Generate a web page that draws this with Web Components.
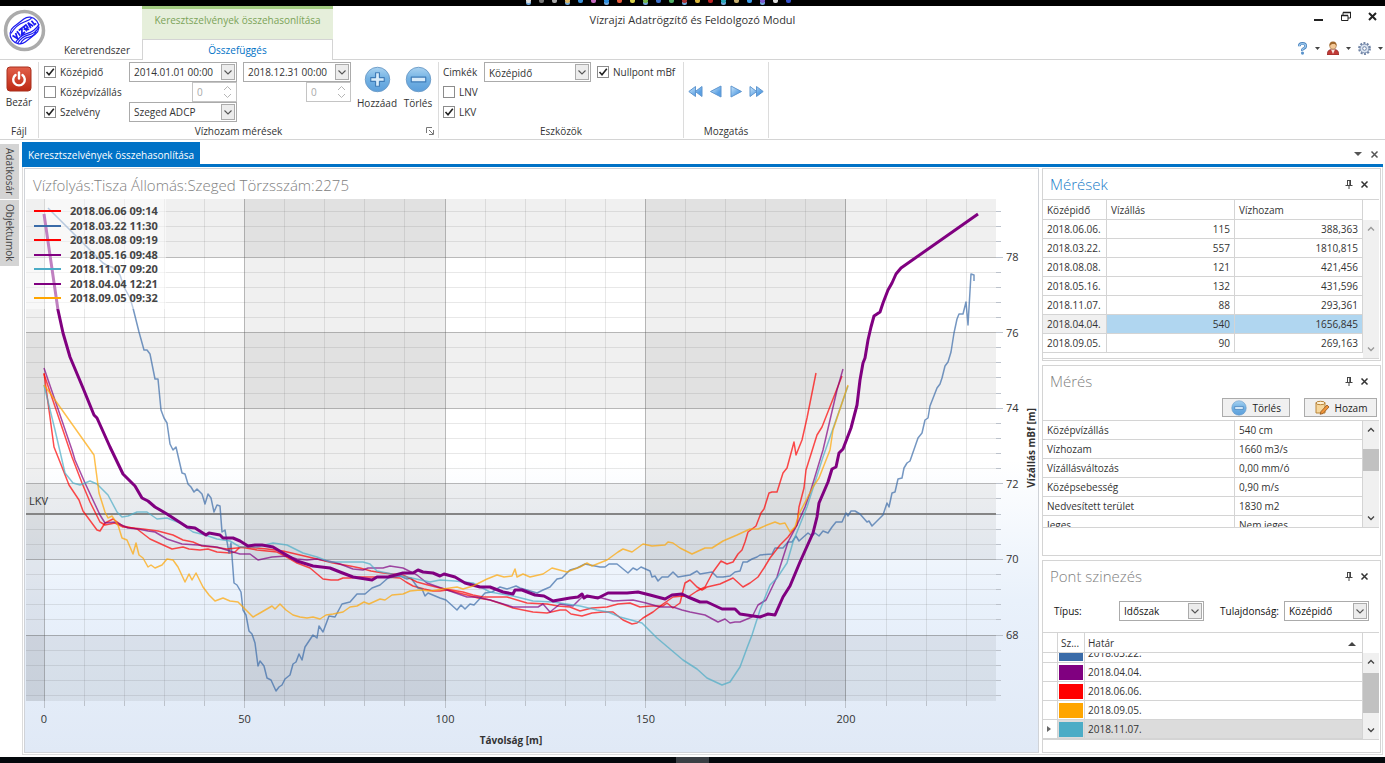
<!DOCTYPE html>
<html lang="hu">
<head>
<meta charset="utf-8">
<title>Vízrajzi Adatrögzítő és Feldolgozó Modul</title>
<style>
  body { margin: 0; font: 10px/16px "Open Sans", "Noto Sans", sans-serif; color: #333; background: #fff; }
</style>
</head>
<body>
<viz-app></viz-app>
<script>
const BASE = `
  *, *::before, *::after { box-sizing: border-box; }
  :host { display: block; box-sizing: border-box; }
  button, input, select { font: inherit; color: inherit; margin: 0; }
  button { background: none; border: 0; padding: 0; display: inline-flex; align-items: center; justify-content: center; }
  svg { display: block; }
`;
class VizElement extends HTMLElement {
  connectedCallback() {
    if (this.shadowRoot) return;
    const root = this.attachShadow({ mode: 'open' });
    root.innerHTML = `<style>${BASE}${this.styles()}</style>${this.markup()}`;
    this.ready(root);
  }
  styles() { return ''; }
  markup() { return '<slot></slot>'; }
  ready() {}
  attr(name, fallback = '') { return this.getAttribute(name) ?? fallback; }
}

const CARET = '<svg width="8" height="5" viewBox="0 0 8 5"><path d="M.5.5 4 4 7.5.5" fill="none" stroke="#555" stroke-width="1.1"/></svg>';
const TRI = '<svg width="5" height="3" viewBox="0 0 5 3"><path d="M0 0h5L2.500 3z" fill="#444"/></svg>';
const ROUND = (size, plus) => `<svg width="${size}" height="${size}" viewBox="0 0 28 28">
  <defs><linearGradient id="g" x2="0" y2="1"><stop stop-color="#a9d2f0"/><stop offset=".45" stop-color="#74b3e4"/><stop offset="1" stop-color="#5c9fdb"/></linearGradient></defs>
  <circle cx="14" cy="14" r="12.700" fill="url(#g)" stroke="#6d9cc8" stroke-width="1"/>
  <path d="${plus ? 'M12 7h4v5h5v4h-5v5h-4v-5H7v-4h5z' : 'M6.500 11.500h15v5h-15z'}" fill="#d9ecfa" stroke="#3f7cb8" stroke-width="1.200" stroke-linejoin="round"/></svg>`;

customElements.define('viz-check', class extends VizElement {
  styles() { return `
    label { display: flex; align-items: center; gap: 4px; height: 20px; white-space: nowrap; }
    input { appearance: none; width: 12px; height: 12px; border: 1px solid #8c8c8c; background: #fff; }
    input:checked { background: #fff url("data:image/svg+xml,%3Csvg xmlns='http://www.w3.org/2000/svg' viewBox='0 0 10 10'%3E%3Cpath d='M1.500 5 4 7.700 8.800 1.800' fill='none' stroke='%23222' stroke-width='1.600'/%3E%3C/svg%3E"); }
  `; }
  markup() { return `<label><input type="checkbox" ${this.hasAttribute('checked') ? 'checked' : ''}><span>${this.attr('label')}</span></label>`; }
});

customElements.define('viz-combo', class extends VizElement {
  styles() { return `
    .box { display: flex; align-items: center; height: 20px; border: 1px solid #ababab; background: #fff; position: relative; }
    select, input { appearance: none; border: 0; outline: 0; background: transparent; width: 100%; height: 18px; padding: 0 18px 0 4px; border-radius: 0; }
    .drop { position: absolute; right: 1px; top: 1px; bottom: 1px; width: 14px; border: 1px solid #ababab; background: #ececec; display: flex; align-items: center; justify-content: center; pointer-events: none; }
  `; }
  markup() {
    const v = this.attr('value'), l = this.attr('label');
    const field = this.hasAttribute('date')
      ? `<input type="text" aria-label="${l}" value="${v}">`
      : `<select aria-label="${l}"><option>${v}</option></select>`;
    return `<div class="box">${field}<span class="drop">${CARET}</span></div>`;
  }
});

customElements.define('viz-spin', class extends VizElement {
  styles() { return `
    .box { display: flex; height: 20px; border: 1px solid #c4c4c4; background: #fff; align-items: center; }
    input { appearance: textfield; border: 0; width: 12px; flex: 1; padding: 0 0 0 4px; background: transparent; color: #a8a8a8; }
    input::-webkit-inner-spin-button { display: none; }
    svg { margin-right: 4px; }
  `; }
  markup() { return `<div class="box"><input type="number" value="0" disabled aria-label="${this.attr('label')}">
    <svg width="9" height="14" viewBox="0 0 9 14"><path d="M1 5l3.500-3.500L8 5M1 9l3.500 3.500L8 9" fill="none" stroke="#b5b5b5"/></svg></div>`; }
});

customElements.define('viz-taskbar', class extends VizElement {
  styles() { return `
    :host { background: #000; height: 6px; overflow: hidden; }
    div { display: flex; justify-content: center; gap: 8px; margin-right: 69px; }
    i { width: 5px; height: 3px; border-radius: 0 0 2px 2px; }
    .on { box-shadow: 0 2px #6fa6d8; }
  `; }
  markup() {
    const c = ['#ddd', '#777', '#aaa', '#dcb96a', '#3a8fd8', '#c66ac0', '#2d8fe0', '#e55b3c', '#d8d04a', '#78b84a', '#3b6fc8', '#4fae66', '#a33', '#d9b53a', '#b22', '#2aa6b8', '#c8b070', '#3d9be6', '#7a5cd0', '#ddd', '#3350c8'];
    return `<div>${c.map((x, i) => `<i class="${i % 3 ? '' : 'on'}" style="background:${x}"></i>`).join('')}</div>`;
  }
});

customElements.define('viz-titlebar', class extends VizElement {
  styles() { return `
    :host { display: grid; grid-template-columns: 142px 191px minmax(0, 1fr); height: 54px; border-bottom: 1px solid #d4d4d4; position: relative; }
    .logo { position: absolute; left: 3px; top: 3px; }
    .first { align-self: end; justify-self: end; margin-right: 12px; height: 18px; }
    .ctx { background: #e6efdb; border-top: 3px solid #a4cc82; display: flex; flex-direction: column; justify-content: space-between; text-align: center; color: #7ba358; margin-bottom: -1px; }
    .ctx span { padding-top: 3px; }
    .ctx button { background: #fff; color: #0072c6; border: 1px solid #d4d4d4; border-bottom: 0; height: 21px; }
    h1 { position: absolute; left: 0; right: 0; top: 6px; margin: 0; text-align: center; font: inherit; font-size: 11px; pointer-events: none; }
    .tools { display: flex; flex-direction: column; justify-content: space-between; align-items: flex-end; padding: 4px 2px 2px 0; }
    .win { display: flex; gap: 16px; padding-right: 5px; height: 12px; }
    .menu { display: flex; align-items: center; gap: 7px; height: 18px; }
    .menu button { gap: 7px; }
  `; }
  markup() { return `
    <svg class="logo" width="43" height="43" viewBox="0 0 43 43">
      <circle cx="21.500" cy="21.500" r="19" fill="#fff" stroke="#ababab" stroke-width="3.500"/>
      <g fill="none" stroke="#1a1af0" stroke-width="1.200" transform="rotate(-38 21.500 21.500)">
        <rect x="6" y="12" width="31" height="19" rx="9"/>
        <path d="M9 15.500q9-3.500 17-1t9 1M7 25.500q8-3 15 0t15 0M8 27.500q7-3 14 0t13 0M10 29.500q6-3 11 0t10-1"/>
        <path d="M9 18l2 5.500 2-5.500M15 17.500V23M17 18h4l-4 5h4M23 23.500V18h3v3h-3l3 2.500M28 23.500l1-6 2 6M33 18v5h2" stroke-width="1.700"/>
      </g>
    </svg>
    <button class="first">Keretrendszer</button>
    <div class="ctx"><span>Keresztszelvények összehasonlítása</span><button>Összefüggés</button></div>
    <div class="tools">
      <div class="win">
        <button aria-label="Kis méret"><svg width="11" height="11"><path d="M1 8h9v2H1z" fill="#222"/></svg></button>
        <button aria-label="Előző méret"><svg width="11" height="11" fill="none" stroke="#222"><path d="M3 4V1.500h7.500V7H8M1.500 4.500h6.500v5H1.500z"/><path d="M1 4.500h7M3 1.500h8" stroke-width="1.600"/></svg></button>
        <button aria-label="Bezárás"><svg width="11" height="11"><path d="M2 2l7 7M9 2L2 9" stroke="#222" stroke-width="2"/></svg></button>
      </div>
      <div class="menu">
        <button aria-label="Súgó"><svg width="11" height="13" viewBox="0 0 12 14"><path d="M2.500 4.500q0-3 3.500-3t3.500 3q0 1.500-2 2.500T6 9.500" fill="none" stroke="#4b83bd" stroke-width="3"/><path d="M2.500 4.200q0-2.500 3.500-2.500t3.500 2.500q0 1.500-2 2.500T6 9" fill="none" stroke="#9cc8ee" stroke-width="1.400"/><circle cx="6" cy="12" r="1.700" fill="#5a93cc"/></svg>${TRI}</button>
        <button aria-label="Felhasználó"><svg width="12" height="14" viewBox="0 0 12 14"><path d="M0 14q0-5 4-5.500h4q4 .5 4 5.500z" fill="#c03a36" stroke="#7f2523" stroke-width=".6"/><path d="M4 8.500h4L6 13z" fill="#f6e6e0"/><circle cx="6" cy="4.800" r="3.400" fill="#f4c896" stroke="#8a5a28" stroke-width=".5"/><path d="M2.500 5Q2 .5 6 .5T9.500 5L8 3H5z" fill="#a0682c"/></svg>${TRI}</button>
        <button aria-label="Beállítások"><svg width="13" height="13" viewBox="0 0 13 13"><circle cx="6.500" cy="6.500" r="5.400" fill="none" stroke="#7185a6" stroke-width="2" stroke-dasharray="2 1.390"/><circle cx="6.500" cy="6.500" r="4.400" fill="#dbe4f0" stroke="#7f93b3"/><circle cx="6.500" cy="6.500" r="1.800" fill="#fff" stroke="#7085a8"/></svg>${TRI}</button>
      </div>
    </div>
    <h1>Vízrajzi Adatrögzítő és Feldolgozó Modul</h1>`; }
});

customElements.define('viz-group', class extends VizElement {
  styles() { return `
    :host { display: flex; flex-direction: column; justify-content: space-between; border-right: 1px solid #dcdcdc; margin: 2px 0 1px; position: relative; }
    .name { text-align: center; line-height: 14px; }
    button { position: absolute; right: 4px; bottom: 3px; }
  `; }
  markup() { return `<slot></slot><div class="name">${this.attr('name')}</div>${this.hasAttribute('more')
    ? '<button aria-label="További beállítások"><svg width="8" height="8" fill="none" stroke="#777"><path d="M.5 6V.5H6M3 3l4 4M7.500 3v4.500H3"/></svg></button>' : ''}`; }
});

customElements.define('viz-ribbon', class extends VizElement {
  styles() { return `
    :host { display: flex; height: 80px; border-bottom: 1px solid #d4d4d4; }
    .file { width: 39px; }
    .flow { width: 400px; }
    .tools { width: 245px; }
    .move { width: 85px; }
    .big { flex-direction: column; justify-content: flex-start; gap: 2px; width: 40px; padding-top: 4px; }
    .file .big { width: 38px; }
    .row { display: flex; }
    .form { display: grid; grid-template-columns: 79px 108px 108px; column-gap: 6px; padding-left: 5px; }
    .form > :first-child, .form > .c { margin-right: -6px; }
    .form viz-spin { width: 45px; justify-self: end; }
    .adders { display: flex; gap: 1px; padding-left: 6px; }
    .eszk { display: grid; grid-template-columns: 36px 107px auto; column-gap: 5px; padding-left: 4px; line-height: 20px; justify-content: start; }
    .eszk viz-check { line-height: 16px; padding-left: 1px; }
    .eszk .w { grid-column: 1 / -1; padding: 0; }
    .arrows { display: flex; gap: 6px; justify-content: center; padding-top: 23px; }
  `; }
  markup() {
    const arrow = (label, d, w = 14) => `<button aria-label="${label}"><svg width="${w}" height="13" viewBox="0 0 ${w} 13"><defs><linearGradient id="a" x2="1" y2="1"><stop stop-color="#cfe8fa"/><stop offset=".7" stop-color="#5aa0e4"/></linearGradient></defs><path d="${d}" fill="url(#a)" stroke="#5f96cf" stroke-width="1" stroke-linejoin="round"/></svg></button>`;
    return `
    <viz-group class="file" name="Fájl"><button class="big">
      <svg width="26" height="26" viewBox="0 0 26 26"><defs><linearGradient id="r" x2="0" y2="1"><stop stop-color="#e2604a"/><stop offset="1" stop-color="#bd2813"/></linearGradient></defs><rect x="1" y="1" width="24" height="24" rx="3" fill="url(#r)" stroke="#a8301f"/><path d="M9.500 9a5.800 5.800 0 1 0 7 0" fill="none" stroke="#fff" stroke-width="2.400" stroke-linecap="round"/><path d="M13 6.500v6" stroke="#fff" stroke-width="2.400" stroke-linecap="round"/></svg>
      <span>Bezár</span></button></viz-group>
    <viz-group class="flow" name="Vízhozam mérések" more><div class="row">
      <div class="form">
        <viz-check checked label="Középidő"></viz-check>
        <viz-combo date label="Kezdő időpont" value="2014.01.01 00:00"></viz-combo>
        <viz-combo date label="Záró időpont" value="2018.12.31 00:00"></viz-combo>
        <viz-check class="c" label="Középvízállás"></viz-check>
        <viz-spin label="Legkisebb vízállás"></viz-spin>
        <viz-spin label="Legnagyobb vízállás"></viz-spin>
        <viz-check class="c" checked label="Szelvény"></viz-check>
        <viz-combo label="Szelvény" value="Szeged ADCP"></viz-combo>
      </div>
      <div class="adders"><button class="big">${ROUND(27, true)}<span>Hozzáad</span></button><button class="big">${ROUND(27, false)}<span>Törlés</span></button></div>
    </div></viz-group>
    <viz-group class="tools" name="Eszközök"><div class="eszk">
      <span>Cimkék</span><viz-combo label="Cimkék" value="Középidő"></viz-combo><viz-check checked label="Nullpont mBf"></viz-check>
      <viz-check class="w" label="LNV"></viz-check>
      <viz-check class="w" checked label="LKV"></viz-check>
    </div></viz-group>
    <viz-group class="move" name="Mozgatás"><div class="arrows">
      ${arrow('Első', 'M7.500 1.500v10L.8 6.500zM14 1.500v10L7.300 6.500z', 15)}${arrow('Előző', 'M12 1v11L1.500 6.500z')}${arrow('Következő', 'M2 1v11l10.500-5.500z')}${arrow('Utolsó', 'M1 1.500v10l6.700-5zM7.500 1.500v10l6.700-5z', 15)}
    </div></viz-group>`; }
});

/* One line per measurement; points are plot units with the origin at (26,199). */
const SERIES = [
  ['2018.06.06 09:14', '#ff0000', 1, '44,373 54,447 60,462 69,485 79,500 83,511 97,530 100,531 105,523 113,519 123,526 137,529 150,539 161,544 172,549 183,547 189,549 200,550 208,549 217,552 230,553 235,552 240,547 257,550 277,552 285,556 297,563 310,568 323,579 331,580 338,580 343,578 350,578 360,577 373,577 385,577 400,578 406,582 413,586 424,589 433,591 440,591 447,590 455,592 467,595 478,598 490,600 502,604 513,608 523,610 533,612 547,613 560,610 566,610 571,614 582,616 592,613 603,612 613,612 623,620 632,624 637,623 643,618 653,612 663,604 673,597 683,596 688,597 697,591 705,587 713,572 721,561 727,564 733,562 738,554 742,550 745,542 748,532 756,526 761,513 764,509 769,493 772,492 777,492 783,473 787,468 794,442 796,455 802,440 807,418 816,373'],
  ['2018.03.22 11:30', '#3a6ba8', 1, '48,208 103,263 108,266 112,267 120,275 124,287 130,298 133,308 139,332 144,350 147,350 150,354 155,379 158,379 161,410 164,418 167,423 170,444 173,450 176,447 182,473 185,474 188,484 191,487 194,492 197,489 202,494 205,504 208,494 211,498 214,512 217,505 220,506 222,532 225,530 229,553 231,543 234,583 237,585 241,592 243,610 246,615 249,631 252,634 255,643 258,666 260,661 264,666 267,678 271,680 276,691 279,687 282,685 285,679 290,675 293,664 296,662 299,654 302,660 305,647 313,635 317,638 319,626 323,632 329,616 335,617 342,604 350,602 357,594 365,594 372,588 380,585 388,578 400,576 407,579 411,578 418,588 422,589 425,596 428,593 440,598 446,600 457,610 461,605 465,609 470,604 474,605 485,593 492,592 500,587 507,589 516,586 520,588 527,590 537,593 543,590 550,587 557,579 562,578 570,570 577,568 585,564 590,565 600,567 605,567 609,564 617,564 628,573 633,568 637,570 641,567 650,571 652,577 655,576 658,581 662,577 668,577 673,572 678,577 690,575 697,571 700,574 712,572 717,577 723,577 730,576 735,572 740,571 743,562 747,562 752,559 757,557 760,555 772,554 775,548 783,548 788,542 792,542 796,536 799,541 808,533 812,536 815,533 819,536 823,531 828,533 832,527 836,522 842,522 846,513 848,516 851,511 855,511 860,514 867,522 869,521 872,526 883,515 887,503 889,507 892,493 895,492 898,479 902,478 904,468 907,463 910,461 918,438 922,433 925,420 928,418 930,406 937,388 940,384 942,378 945,366 948,362 951,352 954,333 957,319 959,314 963,314 966,302 968,325 971,274 974,275 974,281'],
  ['2018.08.08 09:19', '#ff0000', 1, '44,374 72,457 82,483 90,502 100,522 105,525 115,523 123,527 143,529 158,531 173,535 183,540 193,542 202,546 213,547 227,549 247,547 267,549 275,550 283,551 300,555 317,559 333,563 350,566 360,568 371,571 383,573 403,575 417,582 428,585 440,588 463,592 473,595 483,597 507,597 517,600 527,603 547,604 558,606 570,607 580,611 592,608 607,607 618,604 630,603 640,607 651,606 663,606 667,603 673,608 680,603 685,583 690,580 697,587 702,590 707,587 720,584 733,578 743,587 750,583 758,577 764,568 770,558 780,545 788,537 797,525 799,507 804,488 806,470 817,435 822,427 842,376'],
  ['2018.05.16 09:48', '#800080', 1, '44,368 72,450 75,460 85,483 100,515 105,523 115,522 128,528 138,529 148,531 155,532 167,539 182,544 198,545 217,547 233,552 240,554 250,554 258,560 272,557 287,556 297,559 307,560 317,559 333,562 340,564 353,569 363,570 368,568 383,568 390,566 403,568 417,575 427,583 447,590 467,597 477,597 490,600 500,603 513,607 523,607 538,607 543,604 550,612 560,604 573,606 582,597 598,597 613,601 633,600 646,603 660,607 673,607 682,610 690,612 705,615 718,622 725,619 730,623 735,622 740,622 752,617 758,605 766,600 777,577 780,567 788,542 797,525 805,507 810,493 823,450 837,390 843,369'],
  ['2018.11.07 09:20', '#4bacc6', 1, '44,385 55,430 65,473 73,483 80,485 90,481 97,484 108,495 117,512 122,517 128,516 137,512 147,512 157,519 167,518 180,523 193,532 205,535 217,539 230,541 240,547 257,547 273,543 287,545 303,553 317,557 330,562 350,562 363,562 370,564 377,571 392,574 407,577 430,582 440,580 455,581 473,583 490,592 513,596 533,601 553,602 580,606 597,610 608,612 620,617 642,623 657,638 670,649 683,660 697,669 707,678 722,685 730,682 740,667 747,648 752,635 760,610 770,585 777,578 787,563 793,542 807,507 823,457 848,386'],
  ['2018.04.04 12:21', '#800080', 3, '44,214 58,310 63,333 70,357 83,388 94,415 97,418 110,447 123,474 135,486 142,498 148,501 155,507 167,514 187,527 195,528 206,535 209,533 220,535 223,538 233,538 240,541 248,546 255,545 262,545 273,547 283,553 297,561 313,566 330,568 340,572 353,577 372,580 377,577 388,577 403,573 413,573 418,570 423,572 433,573 440,576 444,574 455,577 465,583 480,587 490,587 503,592 513,594 515,590 522,590 535,595 544,596 553,601 570,598 578,597 582,594 584,598 587,596 598,598 608,593 627,593 638,592 650,595 665,599 672,595 682,594 688,597 700,602 707,602 722,609 735,609 740,614 760,617 768,614 775,615 783,597 790,586 800,562 813,533 817,517 819,503 828,482 832,469 836,467 839,453 843,449 851,428 857,405 860,380 863,363 865,358 868,340 871,327 874,316 880,312 883,303 888,290 892,283 896,274 901,268 978,214'],
  ['2018.09.05 09:32', '#ffa500', 1, '44,385 55,400 94,455 99,493 105,512 108,518 112,516 118,525 122,538 127,540 133,554 136,543 139,555 143,558 148,567 151,565 155,568 162,565 167,559 173,560 178,567 185,582 189,574 192,580 196,573 203,587 209,595 215,601 223,598 230,601 238,602 253,617 260,613 272,606 275,609 280,604 286,610 293,615 300,617 307,618 313,617 320,619 326,615 333,614 343,612 350,607 357,606 364,602 369,604 380,599 385,600 392,595 403,594 410,591 420,590 430,591 443,589 457,587 463,589 473,586 487,579 497,575 504,577 512,576 515,569 517,577 523,574 530,577 543,574 552,568 567,572 580,567 587,563 592,566 607,560 618,552 623,549 632,552 643,544 652,546 665,545 668,542 673,543 680,548 692,554 705,548 712,548 723,541 737,535 750,529 758,529 767,525 775,522 780,524 785,523 790,532 795,527 799,514 813,487 819,478 830,450 833,430 848,385'],
];
const W = 970, H = 502;
const px = m => 18 + m * 4.01;
const py = v => 58 + (78 - v) * 37.8;
const xPct = m => (px(m) / W * 100).toFixed(3) + '%';
const yPct = v => (py(v) / H * 100).toFixed(3) + '%';
const LEVELS = Array.from({ length: 33 }, (_, i) => (66.4 + i * 0.4)).filter(v => py(v) > 0 && py(v) < H);
const isMajor = v => Math.abs(v / 2 - Math.round(v / 2)) < 0.01;
const METRES = Array.from({ length: 24 }, (_, i) => i * 10);

customElements.define('viz-chart', class extends VizElement {
  styles() { return `
    :host { display: grid; grid-template: 30px minmax(0, 1fr) 51px / minmax(0, 1fr) 42px; border: 1px solid #d0d3d8; padding-left: 1px; font-size: 11px;
      background: linear-gradient(#fff 50%, #e9f1fb 74%, #e0e9f6); }
    h2 { grid-column: 1 / -1; margin: 0; padding-left: 7px; font-size: 15px; line-height: 32px; font-weight: 300; color: #808080; white-space: nowrap; }
    .plot { position: relative; min-height: 300px; }
    .plot > svg { position: absolute; inset: 0; width: 100%; height: 100%; }
    line { shape-rendering: crispEdges; stroke-width: 1; }
    .m { stroke: rgba(90, 90, 90, .14); }
    .M { stroke: rgba(90, 90, 90, .42); }
    .t { stroke: #bcc2cb; }
    .lkv { stroke: #858585; stroke-width: 2; }
    .axis { width: 100%; height: 100%; overflow: visible; }
    text { fill: #333; }
    .yaxis { display: grid; position: relative; }
    .ytitle { position: absolute; right: 0; top: 50%; margin-top: -42px; writing-mode: vertical-rl; transform: rotate(180deg); font-weight: 700; font-size: 10px; line-height: 14px; white-space: nowrap; }
    .xaxis { position: relative; }
    .xtitle { position: absolute; left: 0; right: 0; bottom: 4px; text-align: center; font-weight: 700; font-size: 10px; }
    .legend { position: absolute; left: 0; top: 0; width: 140px; height: 110px; background: rgba(255, 255, 255, .5); margin: 0; padding: 5px 0 0 8px; list-style: none; font-weight: 700; color: #444; }
    .legend li { display: flex; align-items: center; gap: 9px; line-height: 14px; height: 14px; white-space: nowrap; }
    .legend li:nth-child(even) { height: 15px; }
    .legend i { width: 27px; height: 2px; }
  `; }
  markup() {
    const bands = [[80, 78], [76, 74], [72, 70], [68, 66.25]].map(([a, b]) => { const t = Math.max(0, py(a)); return `<rect x="0" y="${t}" width="${W}" height="${Math.min(H, py(b)) - t}"/>`; }).join('')
      + [[-4.5, 0], [50, 100], [150, 200]].map(([a, b]) => `<rect x="${px(a)}" y="0" width="${px(b) - px(a)}" height="${H}"/>`).join('');
    const grid = LEVELS.map(v => `<line x1="0" x2="100%" y1="${yPct(v)}" y2="${yPct(v)}" class="${isMajor(v) ? 'M' : 'm'}"/>`).join('')
      + METRES.map(m => `<line y1="0" y2="100%" x1="${xPct(m)}" x2="${xPct(m)}" class="${m % 50 ? 'm' : 'M'}"/>`).join('');
    const lines = SERIES.map(([, c, w, p]) => `<polyline points="${p}" stroke="${c}" stroke-width="${w > 1 ? 3 : 1.5}" opacity="${w > 1 ? 1 : 0.7}"/>`).join('');
    return `
    <h2>Vízfolyás:Tisza Állomás:Szeged Törzsszám:2275</h2>
    <div class="plot">
      <svg viewBox="0 0 ${W} ${H}" preserveAspectRatio="none"><g fill="#000" fill-opacity=".06">${bands}</g></svg>
      <svg>${grid}<line x1="0" x2="100%" y1="${yPct(71.2)}" y2="${yPct(71.2)}" class="lkv"/><text x="3" y="${yPct(71.45)}">LKV</text></svg>
      <svg viewBox="26 199 ${W} ${H}" preserveAspectRatio="none" fill="none" stroke-linejoin="round">${lines}</svg>
      <ul class="legend">${SERIES.map(([t, c]) => `<li><i style="background:${c}"></i>${t}</li>`).join('')}</ul>
    </div>
    <div class="yaxis"><svg class="axis">${LEVELS.map(v => `<line x1="0" x2="${isMajor(v) ? 7 : 5}" y1="${yPct(v)}" y2="${yPct(v)}" class="t"/>${isMajor(v) ? `<text x="10" dy="4" y="${yPct(v)}">${Math.round(v)}</text>` : ''}`).join('')}</svg>
      <span class="ytitle">Vízállás mBf [m]</span></div>
    <div class="xaxis"><svg class="axis">${METRES.map(m => `<line y1="0" y2="${m % 50 ? 5 : 7}" x1="${xPct(m)}" x2="${xPct(m)}" class="t"/>${m % 50 ? '' : `<text text-anchor="middle" y="22" x="${xPct(m)}">${m}</text>`}`).join('')}</svg>
      <span class="xtitle">Távolság [m]</span></div>`;
  }
});

customElements.define('viz-panel', class extends VizElement {
  styles() { return `
    :host { display: flex; flex-direction: column; border: 1px solid #d4d4d4; min-width: 0; padding-right: 1px; }
    header { display: flex; align-items: center; height: 30px; padding: 0 10px 0 7px; flex: none; }
    h2 { flex: 1; margin: 0; font-size: 15px; line-height: 24px; font-weight: 300; color: #808080; }
    :host([active]) h2 { color: #1a7cc8; }
    header button { margin-left: 7px; height: 12px; }
  `; }
  markup() { return `<header><h2>${this.attr('name')}</h2>
    <button aria-label="Rögzítés"><svg width="8" height="9"><path d="M2 .5h4M2.500 0v5M5.500 0v5M4.800 0v5M.5 5.500h7M4 5.500V9" stroke="#444" fill="none"/></svg></button>
    <button aria-label="Bezárás"><svg width="9" height="9"><path d="M1.500 1.500l6 6M7.500 1.500l-6 6" stroke="#333" stroke-width="1.500"/></svg></button></header><slot></slot>`; }
});

const TABLE = `
  :host { display: flex; border-top: 1px solid #d4d4d4; border-bottom: 1px solid #d4d4d4; overflow: hidden; position: relative; flex: none; }
  .view { flex: 1; overflow: auto; scrollbar-width: none; min-width: 0; }
  table { width: 100%; border-spacing: 0; table-layout: fixed; }
  th, td { height: 19px; padding: 0 4px; line-height: 16px; border-right: 1px solid #d4d4d4; border-bottom: 1px solid #d4d4d4; font-weight: 400; text-align: left; white-space: nowrap; overflow: hidden; }
  thead th { height: 20px; position: sticky; top: 0; background: #fff; }
  .bar { width: 16px; flex: none; background: #f0f0f0; display: flex; flex-direction: column; align-items: center; padding: 6px 0; }
  .bar i { width: 100%; background: #c1c1c1; }
  .bar svg:last-child { margin-top: auto; }
`;
const bar = (top, gap, thumb, dim) => `<div class="bar" style="margin-top:${top}px"><svg width="8" height="5" opacity="${dim ? .5 : 1}"><path d="M1 4.500 4 1.500l3 3" fill="none" stroke="#444" stroke-width="1.300"/></svg><i style="height:${thumb}px;margin-top:${gap}px"></i><svg width="8" height="5" opacity="${dim ? .5 : 1}"><path d="M1 .5l3 3 3-3" fill="none" stroke="#444" stroke-width="1.300"/></svg></div>`;

customElements.define('viz-measurements', class extends VizElement {
  styles() { return TABLE + `
    :host { height: 160px; }
    td:nth-child(n+2) { text-align: right; }
    .sel td { background: #b0d6f0; }
    .sel td:first-child { background: #f0f0f0; }
  `; }
  markup() {
    const rows = [['2018.06.06.', '115', '388,363'], ['2018.03.22.', '557', '1810,815'], ['2018.08.08.', '121', '421,456'], ['2018.05.16.', '132', '431,596'], ['2018.11.07.', '88', '293,361'], ['2018.04.04.', '540', '1656,845'], ['2018.09.05.', '90', '269,163']];
    return `<div class="view"><table><colgroup><col style="width:20%"><col style="width:40%"><col style="width:40%"></colgroup>
      <thead><tr><th>Középidő</th><th>Vízállás</th><th>Vízhozam</th></tr></thead>
      <tbody>${rows.map((r, i) => `<tr class="${i === 5 ? 'sel' : ''}">${r.map(c => `<td>${c}</td>`).join('')}</tr>`).join('')}</tbody></table></div>${bar(20, 0, 0, true)}`;
  }
});

customElements.define('viz-details', class extends VizElement {
  styles() { return TABLE + `:host { height: 108px; }`; }
  markup() {
    const rows = [['Középvízállás', '540 cm'], ['Vízhozam', '1660 m3/s'], ['Vízállásváltozás', '0,00 mm/ó'], ['Középsebesség', '0,90 m/s'], ['Nedvesített terület', '1830 m2'], ['Jeges', 'Nem jeges']];
    return `<div class="view"><table><colgroup><col style="width:60%"><col></colgroup><tbody>${rows.map(([a, b]) => `<tr><th scope="row">${a}</th><td>${b}</td></tr>`).join('')}</tbody></table></div>${bar(0, 17, 22)}`;
  }
});

customElements.define('viz-colors', class extends VizElement {
  styles() { return TABLE + `
    :host { height: 108px; }
    th, td { padding: 0 3px; }
    th:last-child svg { float: right; margin: 7px 3px 0 0; }
    td:first-child { padding: 0 0 0 4px; }
    td:nth-child(2) { padding: 1px 1px; }
    td i { display: block; height: 15px; }
    .cur td { background: #dcdcdc; }
    .cur td:first-child { background: #fff; }
  `; }
  markup() {
    const rows = [['#3a6ba8', '2018.03.22.'], ['#800080', '2018.04.04.'], ['#ff0000', '2018.06.06.'], ['#ffa500', '2018.09.05.'], ['#4bacc6', '2018.11.07.']];
    return `<div class="view"><table><colgroup><col style="width:15px"><col style="width:27px"><col></colgroup>
      <thead><tr><th></th><th>Sz...</th><th>Határ<svg width="8" height="4"><path d="M0 4 4 0l4 4z" fill="#444"/></svg></th></tr></thead>
      <tbody>${rows.map(([c, t], i) => `<tr class="${i === 4 ? 'cur' : ''}"><td>${i === 4 ? '<svg width="4" height="6"><path d="M0 0l4 3-4 3z" fill="#666"/></svg>' : ''}</td><td><i style="background:${c}"></i></td><td>${t}</td></tr>`).join('')}</tbody></table></div>${bar(20, 9, 40)}`;
  }
  ready(root) { root.querySelector('.view').scrollTop = 9; }
});

customElements.define('viz-app', class extends VizElement {
  styles() { return `
    :host { display: flex; flex-direction: column; min-height: 100vh; }
    .body { flex: 1; display: grid; grid-template-columns: 19px minmax(0, 1fr); column-gap: 3px; padding-right: 2px; }
    .side { display: flex; flex-direction: column; gap: 1px; padding-top: 4px; }
    .side button { writing-mode: vertical-rl; background: #d4d4d4; width: 19px; color: #444; }
    .side button:nth-child(1) { height: 55px; }
    .side button:nth-child(2) { height: 66px; }
    .doc { display: flex; flex-direction: column; }
    .tabs { display: flex; align-items: flex-end; border-bottom: 3px solid #0072c6; height: 27px; padding-right: 4px; }
    .tab { background: #0072c6; color: #fff; height: 22px; width: 178px; padding-top: 3px; white-space: nowrap; }
    .tabs span { flex: 1; }
    .tabs .s { height: 20px; margin-left: 8px; }
    .content { flex: 1; display: grid; grid-template-columns: minmax(0, 1fr) 339px; gap: 3px; padding: 1px; border: 1px solid #dcdcdc; border-top: 0; margin-bottom: 2px; }
    .right { display: grid; grid-template-rows: auto 1fr auto; gap: 4px; }
    .btns { display: flex; justify-content: flex-end; gap: 14px; padding: 2px 2px 3px; }
    .btns button { gap: 5px; height: 19px; border: 1px solid #ababab; background: #f0f0f0; color: #222; padding: 0 8px; min-width: 66px; }
    .btns button:last-child { min-width: 73px; }
    .filter { display: grid; grid-template-columns: 65px 85px 80px 85px; align-items: center; padding: 10px 0 11px 11px; color: #111; }
    .filter span:nth-of-type(2) { text-align: right; padding-right: 5px; }
    .first { padding-bottom: 1px; }
    .last { padding-bottom: 12px; }
    footer { background: #04080c; height: 6px; display: grid; justify-content: center; }
    footer i { width: 33px; background: #3a3f44; }
  `; }
  markup() { return `
    <viz-taskbar></viz-taskbar><viz-titlebar></viz-titlebar><viz-ribbon></viz-ribbon>
    <div class="body">
      <nav class="side"><button>Adatkosár</button><button>Objektumok</button></nav>
      <div class="doc">
        <div class="tabs"><button class="tab">Keresztszelvények összehasonlítása</button><span></span>
          <button class="s" aria-label="Lapok"><svg width="8" height="4"><path d="M0 0h8L4 4z" fill="#555"/></svg></button>
          <button class="s" aria-label="Lap bezárása"><svg width="9" height="9"><path d="M1.500 1.500l6 6M7.500 1.500l-6 6" stroke="#555" stroke-width="1.500"/></svg></button></div>
        <div class="content">
          <viz-chart></viz-chart>
          <div class="right">
            <viz-panel class="first" active name="Mérések"><viz-measurements></viz-measurements></viz-panel>
            <viz-panel name="Mérés">
              <div class="btns"><button>${ROUND(16, false)}Törlés</button><button><svg width="16" height="16" viewBox="0 0 16 16"><path d="M2 2.500h9v10.500H2z" fill="#f6d79c" stroke="#b9853a"/><ellipse cx="6.500" cy="3" rx="4.500" ry="1.700" fill="#fff3d8" stroke="#b9853a"/><path d="M7 11.500 13 5l2 2-6 6.500-2.800.8z" fill="#f0953a" stroke="#8d5420" stroke-width=".8"/></svg>Hozam</button></div>
              <viz-details></viz-details></viz-panel>
            <viz-panel class="last" name="Pont szinezés">
              <div class="filter"><span>Típus:</span><viz-combo label="Típus" value="Időszak"></viz-combo><span>Tulajdonság:</span><viz-combo label="Tulajdonság" value="Középidő"></viz-combo></div>
              <viz-colors></viz-colors></viz-panel>
          </div>
        </div>
      </div>
    </div>
    <footer><i></i></footer>`; }
});
</script>
</body>
</html>
